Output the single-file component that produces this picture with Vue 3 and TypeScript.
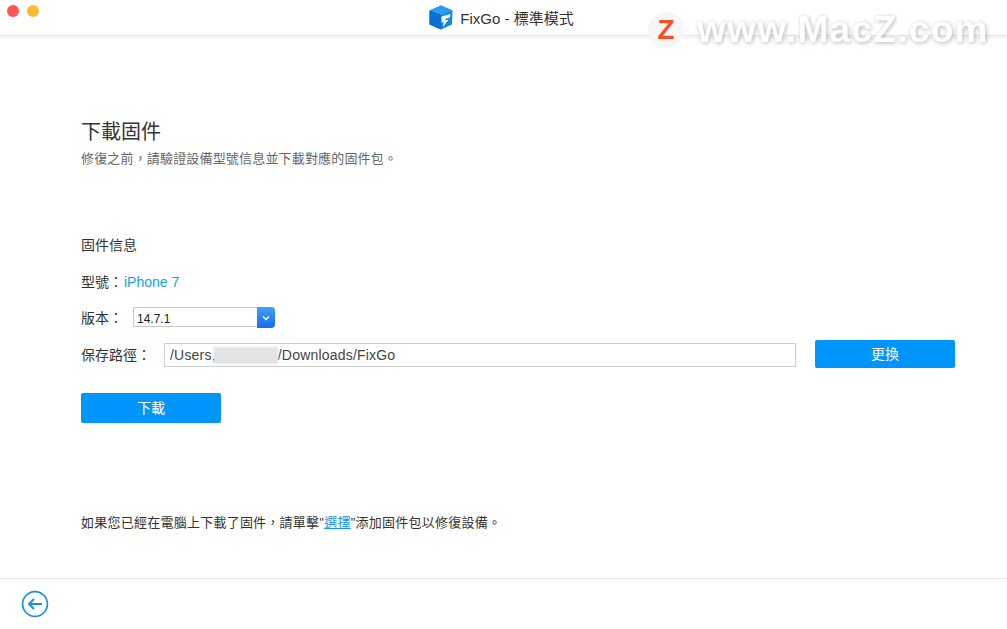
<script setup lang="ts">
const description = '修復之前\uFF0C請驗證設備型號信息並下載對應的固件包。'
const version = '14.7.1'
</script>

<template>
  <div class="window">
    <header class="titlebar">
      <div class="lights">
        <span class="light red"></span>
        <span class="light yellow"></span>
      </div>
      <div class="title">
        <svg class="logo" width="24" height="25" viewBox="0 0 24 25">
          <path d="M12 0.5 L23.5 5.5 L23 19.5 L12 24.5 L0.5 19.5 L0.5 5.5 Z" fill="#0f86e6" />
          <path d="M12 0.5 L23.5 5.5 L12 10 L0.5 5.5 Z" fill="#2a9bf0" />
          <path d="M0.5 5.5 L12 10 L12 24.5 L0.5 19.5 Z" fill="#0a6fd0" />
          <path d="M12.5 11.5 L21.5 9 L20.8 12.5 L16.6 13.8 L16.2 15.6 L19.6 14.6 L14 22 L14.6 17 L12.5 17.6 Z" fill="#fff" />
        </svg>
        <span class="title-text">FixGo - 標準模式</span>
      </div>
    </header>
    <div class="title-shade"></div>

    <main class="content">
      <h1 class="heading">下載固件</h1>
      <p class="desc">{{ description }}</p>

      <h2 class="section">固件信息</h2>

      <div class="row model-row">
        <span>型號&#xFF1A;</span><span class="model">iPhone 7</span>
      </div>

      <div class="row version-row">
        <span class="version-label">版本&#xFF1A;</span>
        <div class="select">
          <span class="select-value">{{ version }}</span>
          <span class="select-arrow">
            <svg width="8" height="6" viewBox="0 0 8 6">
              <path d="M1 1.5 L4 4.5 L7 1.5" fill="none" stroke="#fff" stroke-width="1.4" />
            </svg>
          </span>
        </div>
      </div>

      <div class="row path-row">
        <span class="path-label">保存路徑&#xFF1A;</span>
        <div class="path-input">
          <span>/Users,</span><span class="blur"></span><span>/Downloads/FixGo</span>
        </div>
        <button class="btn change">更換</button>
      </div>

      <button class="btn download">下載</button>

      <p class="hint">
        如果您已經在電腦上下載了固件&#xFF0C;請單擊"<a class="link">選擇</a>"添加固件包以修復設備。
      </p>
    </main>

    <footer class="footer">
      <svg class="back" width="28" height="28" viewBox="0 0 28 28">
        <circle cx="14" cy="14" r="12.4" fill="none" stroke="#1c8fe3" stroke-width="1.7" />
        <path d="M21 14 H8.5 M13 9 L8 14 L13 19" fill="none" stroke="#1c8fe3" stroke-width="2" />
      </svg>
    </footer>

    <div class="watermark">
      <span class="wm-badge">Z</span>
      <span class="wm-text">www.MacZ.com</span>
    </div>
  </div>
</template>

<style>
body {
  margin: 0;
  background: #fff;
}
</style>

<style scoped>
.window {
  position: relative;
  width: 1007px;
  height: 629px;
  overflow: hidden;
  display: flex;
  flex-direction: column;
  background: #fff;
  color: #333;
  font-family: "Liberation Sans", "Noto Sans CJK TC", sans-serif;
  font-size: 14px;
}

.titlebar {
  height: 35px;
  flex: none;
  position: relative;
  display: flex;
  justify-content: center;
  background: #fff;
  border-bottom: 1px solid #e8e8e8;
}

.title-shade {
  height: 3px;
  flex: none;
  background: #f6f6f6;
}

.lights {
  position: absolute;
  top: 5px;
  left: 7px;
  display: flex;
  gap: 8px;
}

.light {
  width: 12px;
  height: 12px;
  border-radius: 50%;
}

.red {
  background: #fc5753;
}

.yellow {
  background: #fdbc2e;
}

.title {
  display: flex;
  align-items: center;
  gap: 7px;
  margin-top: -1px;
  margin-right: 4px;
}

.title-text {
  font-size: 15px;
  color: #333;
}

.content {
  flex: 1;
  padding: 0 52px 0 81px;
}

.heading {
  margin: 81px 0 0;
  font-size: 20px;
  line-height: 24px;
  font-weight: 400;
  color: #333;
}

.desc {
  margin: 6px 0 0;
  font-size: 13px;
  line-height: 18px;
  letter-spacing: 0.17px;
  color: #666;
}

.section {
  margin: 67px 0 0;
  font-size: 14px;
  line-height: 20px;
  font-weight: 400;
  color: #333;
}

.row {
  display: flex;
  align-items: center;
}

.model-row {
  margin-top: 17px;
  line-height: 20px;
}

.model {
  color: #16a0e6;
  margin-left: 1px;
}

.version-row {
  margin-top: 14px;
  height: 22px;
}

.version-label {
  width: 52px;
}

.select {
  width: 142px;
  height: 20px;
  display: flex;
  justify-content: space-between;
  border: 1px solid #c8c8c8;
  border-right: none;
  box-sizing: border-box;
  border-radius: 2px;
}

.select-value {
  font-size: 12px;
  line-height: 22px;
  padding-left: 3px;
  color: #222;
}

.select-arrow {
  width: 18px;
  height: 21px;
  margin-top: -1px;
  border-radius: 0 4px 4px 0;
  background: linear-gradient(#4a9cf6, #0f6ff0);
  display: flex;
  align-items: center;
  justify-content: center;
}

.path-row {
  margin-top: 12px;
}

.path-label {
  width: 83px;
}

.path-input {
  width: 632px;
  height: 24px;
  margin-top: 2px;
  box-sizing: border-box;
  border: 1px solid #cfcfcf;
  padding-left: 5px;
  display: flex;
  align-items: center;
  font-size: 14px;
  letter-spacing: 0.2px;
  color: #444;
}

.blur {
  width: 64px;
  height: 17px;
  margin-left: -2px;
  background: #e3e3e3;
  filter: blur(1px);
}

.btn {
  display: block;
  border: none;
  border-radius: 2px;
  background: #0095fa;
  color: #fff;
  font-family: inherit;
  font-size: 14px;
  padding: 0 0 2px;
}

.change {
  width: 140px;
  height: 28px;
  margin-left: 19px;
}

.download {
  width: 140px;
  height: 30px;
  margin-top: 25px;
}

.hint {
  margin: 91px 0 0;
  font-size: 13px;
  line-height: 18px;
  letter-spacing: 0.24px;
  color: #333;
}

.link {
  color: #0d95ee;
  text-decoration: underline;
}

.footer {
  height: 50px;
  flex: none;
  border-top: 1px solid #e8e8e8;
  display: flex;
  align-items: center;
  padding-left: 21px;
}

.watermark {
  position: absolute;
  top: 8px;
  left: 648px;
  display: flex;
  align-items: center;
  gap: 13px;
}

.wm-badge {
  width: 36px;
  height: 36px;
  border-radius: 50%;
  background: #f6f6f6;
  color: #f4511e;
  font-size: 28px;
  font-weight: 700;
  line-height: 36px;
  text-align: center;
}

.wm-text {
  font-size: 37px;
  font-weight: 700;
  line-height: 44px;
  color: #fff;
  text-shadow: 1px 1px 4px rgba(0, 0, 0, 0.3);
  letter-spacing: 1.3px;
}
</style>
